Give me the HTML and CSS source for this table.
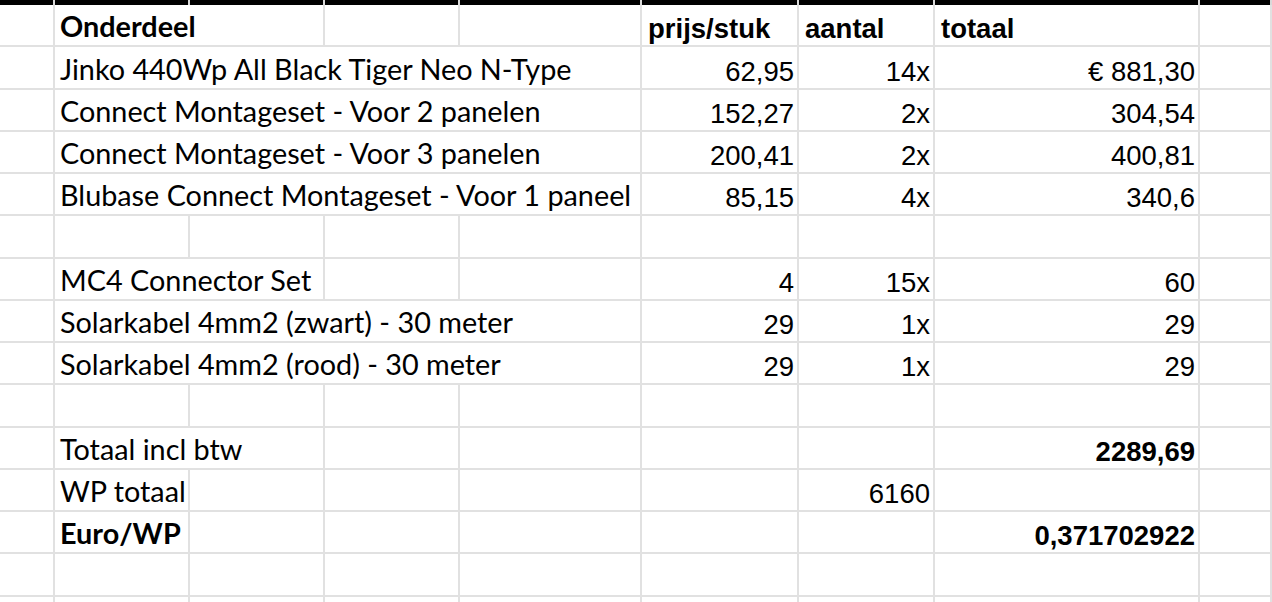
FILE: index.html
```html
<!DOCTYPE html>
<html lang="nl">
<head>
<meta charset="utf-8">
<title>Onderdelen</title>
<link rel="stylesheet" href="styles.css">
</head>
<body>
<div class="sheet">
  <div class="band"></div><div class="band"></div><div class="band"></div><div class="band"></div><div class="band"></div><div class="band"></div><div class="band"></div><div class="band"></div><div class="band"></div>

  <div class="c"></div><div class="c s2 t b">Onderdeel</div><div class="c"></div><div class="c"></div><div class="c n b l">prijs/stuk</div><div class="c n b l">aantal</div><div class="c n b l">totaal</div><div class="c"></div>

  <div class="c"></div><div class="c s4 t">Jinko 440Wp All Black Tiger Neo N-Type</div><div class="c n">62,95</div><div class="c n">14x</div><div class="c n">€ 881,30</div><div class="c"></div>

  <div class="c"></div><div class="c s4 t">Connect Montageset - Voor 2 panelen</div><div class="c n">152,27</div><div class="c n">2x</div><div class="c n">304,54</div><div class="c"></div>

  <div class="c"></div><div class="c s4 t">Connect Montageset - Voor 3 panelen</div><div class="c n">200,41</div><div class="c n">2x</div><div class="c n">400,81</div><div class="c"></div>

  <div class="c"></div><div class="c s4 t">Blubase Connect Montageset - Voor 1 paneel</div><div class="c n">85,15</div><div class="c n">4x</div><div class="c n">340,6</div><div class="c"></div>

  <div class="c"></div><div class="c"></div><div class="c"></div><div class="c"></div><div class="c"></div><div class="c"></div><div class="c"></div><div class="c"></div><div class="c"></div>

  <div class="c"></div><div class="c s2 t">MC4 Connector Set</div><div class="c"></div><div class="c"></div><div class="c n">4</div><div class="c n">15x</div><div class="c n">60</div><div class="c"></div>

  <div class="c"></div><div class="c s4 t">Solarkabel 4mm2 (zwart) - 30 meter</div><div class="c n">29</div><div class="c n">1x</div><div class="c n">29</div><div class="c"></div>

  <div class="c"></div><div class="c s4 t">Solarkabel 4mm2 (rood) - 30 meter</div><div class="c n">29</div><div class="c n">1x</div><div class="c n">29</div><div class="c"></div>

  <div class="c"></div><div class="c"></div><div class="c"></div><div class="c"></div><div class="c"></div><div class="c"></div><div class="c"></div><div class="c"></div><div class="c"></div>

  <div class="c"></div><div class="c s2 t">Totaal incl btw</div><div class="c"></div><div class="c"></div><div class="c"></div><div class="c"></div><div class="c n b">2289,69</div><div class="c"></div>

  <div class="c"></div><div class="c t">WP totaal</div><div class="c"></div><div class="c"></div><div class="c"></div><div class="c"></div><div class="c n">6160</div><div class="c"></div><div class="c"></div>

  <div class="c"></div><div class="c t b">Euro/WP</div><div class="c"></div><div class="c"></div><div class="c"></div><div class="c"></div><div class="c"></div><div class="c n b">0,371702922</div><div class="c"></div>

  <div class="c"></div><div class="c"></div><div class="c"></div><div class="c"></div><div class="c"></div><div class="c"></div><div class="c"></div><div class="c"></div><div class="c"></div>

  <div class="c"></div><div class="c"></div><div class="c"></div><div class="c"></div><div class="c"></div><div class="c"></div><div class="c"></div><div class="c"></div><div class="c"></div>
</div>
</body>
</html>
```

FILE: styles.css
```css
html, body {
  margin: 0;
  padding: 0;
  background: #ffffff;
  overflow: hidden;
}

.sheet {
  display: grid;
  grid-template-columns: 55px 135px 135px 135px 182px 157px 136px 265px 1fr;
  grid-template-rows: 5px;
  grid-auto-rows: 42.25px;
  width: 1272px;
  height: 602px;
  overflow: hidden;
  color: #000000;
}

.band {
  background: #000000;
  border-right: 2px solid #d9d9d9;
  box-sizing: border-box;
}

.c {
  box-sizing: border-box;
  border-right: 2px solid #e1e1e1;
  border-bottom: 2px solid #e1e1e1;
  display: flex;
  align-items: flex-end;
  white-space: nowrap;
  overflow: visible;
  min-width: 0;
}

.s2 { grid-column: span 2; }
.s4 { grid-column: span 4; }

.t {
  font-family: "Lato", "Liberation Sans", sans-serif;
  font-size: 28.8px;
  line-height: 29px;
  padding: 0 4px 4px 5px;
}

.n {
  font-family: "Liberation Sans", Arial, sans-serif;
  font-size: 27.5px;
  line-height: 27px;
  justify-content: flex-end;
  padding: 0 3px 3px 5px;
}

.n.l {
  justify-content: flex-start;
  padding-left: 6px;
}

.b {
  font-weight: 700;
}
```
